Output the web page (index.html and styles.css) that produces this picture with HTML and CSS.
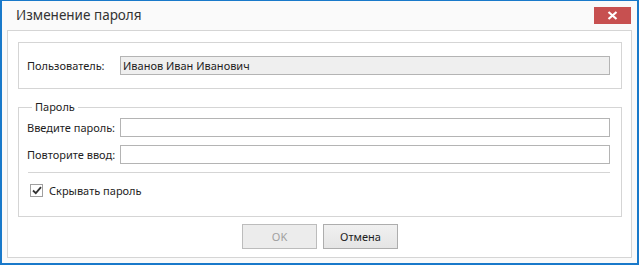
FILE: index.html
```html
<!DOCTYPE html>
<html lang="ru">
<head>
    <meta charset="UTF-8">
    <title>Изменение пароля</title>
    <link rel="stylesheet" href="styles.css">
</head>
<body>
    <div class="window">
        <div class="title-bar">
            <span class="title">Изменение пароля</span>
            <button class="close-btn" aria-label="Закрыть">
                <svg width="11" height="9" viewBox="0 0 11 9">
                    <path d="M1.5 1 L9.5 8 M9.5 1 L1.5 8" stroke="#fff" stroke-width="2.2" fill="none"/>
                </svg>
            </button>
        </div>

        <div class="panel">
            <div class="group user-group">
                <span class="label">Пользователь:</span>
                <div class="field readonly">Иванов Иван Иванович</div>
            </div>

            <fieldset class="group password-group">
                <legend>Пароль</legend>
                <div class="row">
                    <span class="label">Введите пароль:</span>
                    <div class="field"></div>
                </div>
                <div class="row">
                    <span class="label">Повторите ввод:</span>
                    <div class="field"></div>
                </div>
                <div class="separator"></div>
                <label class="check">
                    <span class="box">
                        <svg width="10" height="9" viewBox="0 0 10 9">
                            <path d="M1 4.5 L3.8 7.2 L9 1.2" stroke="#333" stroke-width="1.8" fill="none"/>
                        </svg>
                    </span>
                    Скрывать пароль
                </label>
            </fieldset>

            <div class="buttons">
                <button class="btn" disabled>OK</button>
                <button class="btn">Отмена</button>
            </div>
        </div>
    </div>
</body>
</html>
```

FILE: styles.css
```css
* {
    box-sizing: border-box;
    margin: 0;
    padding: 0;
}

body {
    background: #fff;
    font-family: "Noto Sans", "Open Sans", sans-serif;
    font-size: 11px;
    color: #1e1e1e;
}

.window {
    width: 639px;
    height: 265px;
    background: #fafafa;
    border: 2px solid #1979ca;
    border-top-width: 1px;
}

.title-bar {
    height: 29px;
    display: flex;
    align-items: flex-start;
    justify-content: space-between;
    padding: 6px 6px 0 14px;
}

.title {
    font-size: 13.5px;
    color: #333;
    line-height: 17px;
}

.close-btn {
    width: 37px;
    height: 17px;
    background: #c75050;
    border: none;
    display: flex;
    align-items: center;
    justify-content: center;
}

.panel {
    margin: 0 5px;
    height: 228px;
    background: #fff;
    border: 1px solid #d5d5d5;
    padding: 11px 9px 0 10px;
}

.group {
    border: 1px solid #d5d5d5;
}

.user-group {
    height: 47px;
    display: flex;
    align-items: center;
    padding: 0 11px 0 8px;
}

.label {
    width: 93px;
    flex-shrink: 0;
    white-space: nowrap;
}

.field {
    flex: 1;
    height: 19px;
    border: 1px solid #b4b4b4;
    background: #fff;
    padding: 0 2px;
    line-height: 17px;
}

.field.readonly {
    background: #efefef;
}

.password-group {
    margin-top: 11px;
    height: 117px;
    padding: 4px 11px 0 8px;
}

.password-group legend {
    padding: 0 3px;
    margin-left: 5px;
    line-height: 14px;
}

.row {
    display: flex;
    align-items: center;
    margin-bottom: 8px;
}

.separator {
    height: 1px;
    background: #d5d5d5;
    margin: 4px 0 0 1px;
}

.check {
    display: flex;
    align-items: center;
    gap: 6px;
    margin: 10px 0 0 3px;
}

.box {
    width: 13px;
    height: 13px;
    border: 1px solid #a0a0a0;
    display: flex;
    align-items: center;
    justify-content: center;
}

.buttons {
    display: flex;
    justify-content: center;
    gap: 6px;
    margin-top: 7px;
}

.btn {
    width: 75px;
    height: 25px;
    border: 1px solid #adadad;
    background: linear-gradient(#f0f0f0, #e5e5e5);
    font-family: inherit;
    font-size: 11px;
    color: #1e1e1e;
}

.btn:disabled {
    color: #a0a0a0;
    background: #ececec;
    border-color: #bcbcbc;
}
```
